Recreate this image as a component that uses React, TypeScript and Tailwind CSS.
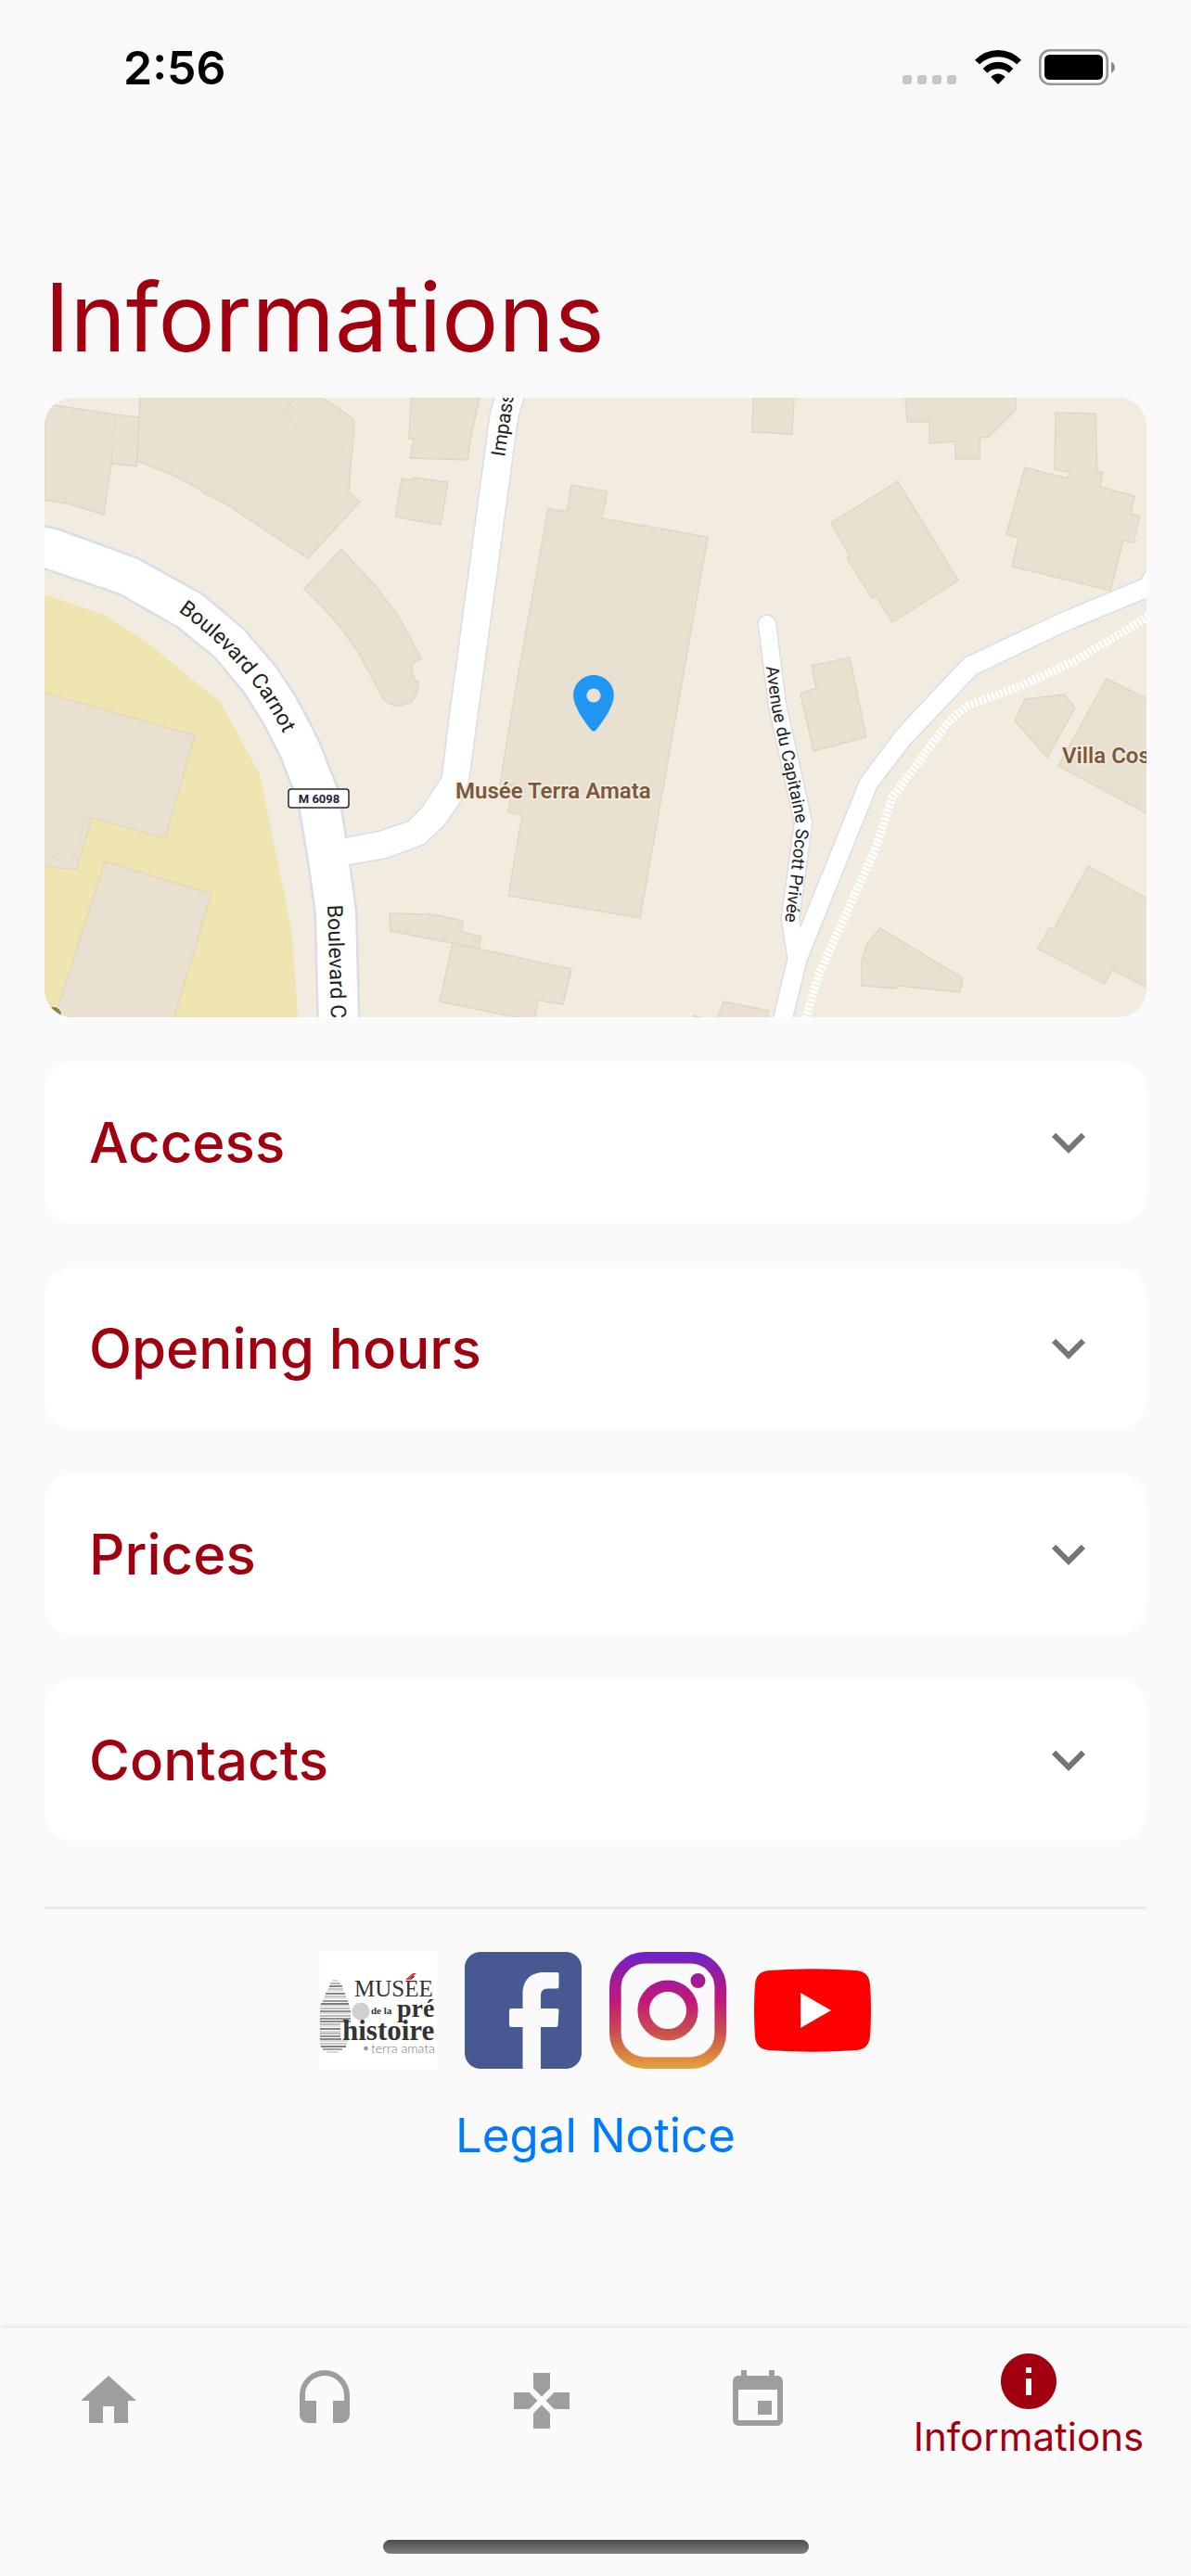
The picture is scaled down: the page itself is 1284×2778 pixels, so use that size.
import { useState } from 'react';
import { MdEvent, MdExpandMore, MdGames, MdHeadset, MdHome, MdInfo } from 'react-icons/md';

const sections = [
  { title: 'Access' },
  { title: 'Opening hours' },
  { title: 'Prices' },
  { title: 'Contacts' },
];

const tabs = [
  { name: 'Home', Icon: MdHome },
  { name: 'Audio guide', Icon: MdHeadset },
  { name: 'Games', Icon: MdGames },
  { name: 'Events', Icon: MdEvent },
  { name: 'Informations', Icon: MdInfo },
];

const buildings = [
  '0,6 11,8 76,18 103,21 99,74 72,71 64,126 25,114 0,110',
  '103,0 102,21 100,69 103,69 142,85 168,99 172,103 185,109 192,113 195,114 284,173 340,112 328,101 331,63 333,44 334,24 317,11 298,0',
  '320,163 355,201 378,231 389,249 406,281 395,288 399,305 403,306 403,313 400,322 395,329 382,332 371,330 365,324 338,274 319,247 302,228 280,206',
  '395,0 393,44 398,44 394,65 456,67 460,41 469,0',
  '385,87 397,89 398,86 435,91 427,137 392,131 378,128',
  '568,94 607,101 601,130 715,150 642,561 500,537 515,450 500,447 504,418 491,417 505,331 543,119 563,123',
  '764,0 763,37 806,39 808,0',
  '928,0 930,26 954,26 954,49 982,47 982,66 1008,66 1008,43 1018,42 1047,13 1047,0',
  '1090,16 1133,17 1135,79 1141,81 1138,96 1175,106 1171,125 1181,128 1174,156 1163,154 1149,208 1043,182 1050,151 1037,147 1057,75 1103,87 1105,80 1089,77',
  '920,90 985,197 914,242 896,213 892,216 865,173 868,170 848,135',
  '868,280 886,366 829,381 815,319 832,313 827,289',
  '1057,325 1099,320 1111,334 1081,388 1046,348',
  '1145,303 1192,326 1192,450 1093,397',
  '1125,505 1192,542 1192,638 1151,617 1143,632 1071,594 1083,572 1088,573',
  '901,572 990,626 987,641 919,634 918,637 881,634 881,608 886,590',
  '372,556 414,557 414,556 451,564 450,576 471,581 468,594 439,588 373,575',
  '440,588 568,616 559,654 532,650 528,670 508,668 426,651',
  '732,651 781,661 779,672 724,672',
  '-4,317 162,364 130,475 51,453 34,509 -4,505',
  '65,500 180,535 139,670 14,670 14,659',
];

const boulevard =
  'M-6 138 15 143 100 174 170 213 214 250 249 291 270 323 285 351 295 371 314 419 319 444 324 475 328 503 335 554 338 675 296 675 293 556 285 498 276 444 268 419 255 386 237 351 216 317 184 279 145 247 82 211 -6 181Z';
const impasse =
  'M488 -6 486 0 481 16 436 351 429 409 409 440 393 457 361 468 324 475 306 478 309 506 328 503 368 496 409 481 432 459 448 435 457 412 468 331 510 21 518 -6Z';
const avenue = 'M779 244 790 331 818 458 804 561 811 607';
const coastRoad =
  'M1194 176 1183 196 1094 233 992 281 926 351 916 363 880 411 815 572 801 607 785 674 805 674 821 608 897 420 932 374 954 351 1004 298 1102 251 1194 213Z';

function MuseumMap() {
  return (
    <svg
      viewBox="0 0 1188 668"
      className="block h-auto w-full rounded-[30px]"
      fontFamily="Roboto, sans-serif"
      role="img"
      aria-label="Map around Musée Terra Amata"
    >
      <rect width="1188" height="668" fill="#f2ebdf" />
      <path d="M0 212 64 234 111 264 189 328 191 331 232 406 267 578 273 668H0Z" fill="#eee5b1" />

      {/* BUILDINGS */}
      <g fill="#e8e1d2" stroke="#e0d7bd" strokeWidth="1.4">
        {buildings.map((points) => (
          <polygon key={points} points={points} />
        ))}
        <path d="M700 668v-2l9 3" />
        <path d="M77 18 72 71M269 0 257 21 331 63M0 494 30 503 45 451 51 453" fill="none" strokeWidth="0.7" />
      </g>
      <circle cx="9" cy="666" r="10" fill="#938541" stroke="#fff" strokeWidth="1" />

      {/* ROADS */}
      <g stroke="#d9dde8" fill="none">
        <path d={boulevard} strokeWidth="5" />
        <path d={impasse} strokeWidth="3" />
        <path d={avenue} strokeWidth="21" strokeLinecap="round" />
        <path d={coastRoad} strokeWidth="3" />
      </g>
      <g fill="#fff">
        <path d={boulevard} />
        <path d={impasse} />
        <path d={coastRoad} />
        <path d={avenue} fill="none" stroke="#fff" strokeWidth="18" strokeLinecap="round" />
      </g>
      <path
        d="M1190 236 1112 283 1052 311 995 332 975 349 914 431 895 488 835 621 820 672"
        fill="none"
        stroke="#fff"
        strokeWidth="9"
        strokeDasharray="3 1.8"
      />

      {/* STREET NAMES */}
      <path id="carnot" d="M144 230Q221 285 260 367L270 400" fill="none" />
      <path id="carnot-south" d="M305 547 309 668 312 760" fill="none" />
      <path id="impasse" d="M496 64 507 -10 512 -60" fill="none" />
      <path id="avenue" d="M778 290 784 335 809 452Q811 460 810 470L797 575" fill="none" />
      <g fill="#222">
        <text fontSize="23">
          <textPath href="#carnot">Boulevard Carnot</textPath>
        </text>
        <text fontSize="23">
          <textPath href="#carnot-south">Boulevard C</textPath>
        </text>
        <text fontSize="21">
          <textPath href="#impasse">Impass</textPath>
        </text>
        <text fontSize="19">
          <textPath href="#avenue">Avenue du Capitaine Scott Privée</textPath>
        </text>
      </g>
      <rect x="263" y="422" width="65" height="20" rx="3" fill="#fff" stroke="#24243a" strokeWidth="1.5" />
      <text x="296" y="437" fontSize="13" fontWeight="700" textAnchor="middle" fill="#24243a">
        M 6098
      </text>

      {/* PLACES */}
      <g fontSize="24" fontWeight="600" fill="#7d583c" stroke="#f4eee2" strokeWidth="3" paintOrder="stroke">
        <text x="443" y="432">
          Musée Terra Amata
        </text>
        <text x="1097" y="394">
          Villa Cos
        </text>
      </g>
      <path
        transform="translate(554.5 292.7) scale(3.12)"
        d="M12 2C8.13 2 5 5.13 5 9c0 4.17 4.42 9.92 6.24 12.11.4.48 1.13.48 1.53 0C14.58 18.92 19 13.17 19 9c0-3.87-3.13-7-7-7z"
        fill="#2196f3"
      />
      <circle cx="592" cy="321" r="7.6" fill="#e8e1d2" />
    </svg>
  );
}

// [y, left, right, colour] for each line of the biface drawing
const stripes: [number, number, number, string][] = [
  [31, 13, 20, '#bbb'],
  [34, 11, 22, '#777'],
  [37, 10, 24, '#222'],
  [40, 9, 25, '#999'],
  [42, 7, 26, '#ccc'],
  [45, 6, 27, '#222'],
  [48, 5, 28, '#999'],
  [50, 4, 29, '#ccc'],
  [53, 3, 30, '#444'],
  [56, 1, 31, '#111'],
  [58, 0, 32, '#bbb'],
  [61, 0, 32, '#888'],
  [64, 0, 33, '#222'],
  [66, 0, 33, '#bbb'],
  [69, 0, 33, '#777'],
  [72, 0, 33, '#222'],
  [75, 0, 33, '#111'],
  [78, 0, 22, '#888'],
  [80, 0, 22, '#ccc'],
  [83, 0, 22, '#222'],
  [86, 0, 22, '#aaa'],
  [88, 0, 22, '#888'],
  [91, 0, 22, '#333'],
  [94, 0, 23, '#222'],
  [96, 0, 30, '#bbb'],
  [99, 0, 29, '#999'],
  [102, 1, 28, '#111'],
  [105, 3, 24, '#555'],
  [108, 7, 20, '#bbb'],
];

function MuseumLogo() {
  return (
    <svg viewBox="0 0 126 126" className="size-[126px]" fill="#333" fontFamily="'Liberation Serif', serif">
      <rect width="126" height="126" fill="#fff" />
      {stripes.map(([y, x1, x2, color]) => (
        <path key={y} d={`M${x1} ${y}H${x2}`} stroke={color} strokeWidth="1.1" />
      ))}
      <circle cx="44" cy="64" r="9.5" fill="#d0d0d2" />
      <text x="37" y="48" fontSize="25">
        MUSÉE
      </text>
      <path d="m92 30 8-7h4l-8 7z" fill="#ed2f3a" />
      <g fontWeight="700">
        <text x="55" y="67" fontSize="11">
          de la
        </text>
        <text x="83" y="70" fontSize="28">
          pré
        </text>
        <text x="24" y="95" fontSize="31">
          histoire
        </text>
      </g>
      <circle cx="49.5" cy="104" r="2.3" fill="#999" />
      <text x="55" y="109" fontSize="14" fontWeight="300" fontFamily="Lato, sans-serif" fill="#777">
        terra amata
      </text>
    </svg>
  );
}

function FacebookLogo() {
  return (
    <svg viewBox="0 0 126 126" className="size-[126px]">
      <rect width="126" height="126" rx="17" fill="#475993" />
      <path
        d="M62.5 126V81H50q-2 0-2-2V63q0-2 2-2h12.5V45C62.5 31 71 22 85 22h14.5q2 0 2 2v13.5q0 2-2 2H90c-6 0-8 3-8 8V61h17.5q2 0 2 2l-1 16q0 2-2 2H82v45z"
        fill="#fafafa"
      />
    </svg>
  );
}

function InstagramLogo() {
  return (
    <svg viewBox="0 0 126 126" className="size-[126px]">
      <defs>
        <linearGradient id="insta" x1="0" y1="0" x2="0" y2="126" gradientUnits="userSpaceOnUse">
          <stop offset="0" stopColor="#6b25ce" />
          <stop offset="0.2" stopColor="#981c9c" />
          <stop offset="0.42" stopColor="#c4177a" />
          <stop offset="0.68" stopColor="#c94d50" />
          <stop offset="0.85" stopColor="#d67c42" />
          <stop offset="1" stopColor="#e6a13b" />
        </linearGradient>
      </defs>
      <g fill="none" stroke="url(#insta)" strokeWidth="12.6">
        <rect x="6.3" y="6.3" width="113.4" height="113.4" rx="32" />
        <circle cx="63" cy="63" r="26.3" />
      </g>
      <circle cx="95.5" cy="31" r="8" fill="url(#insta)" />
    </svg>
  );
}

function YoutubeLogo() {
  return (
    <svg viewBox="0 0 126 126" className="size-[126px]">
      <path
        d="M16 20Q63 16.5 110 20C120 21 124 26 125 35Q127 63 125 91C124 100 120 105 110 106Q63 109.5 16 106C6 105 2 100 1 91Q-1 63 1 35C2 26 6 21 16 20Z"
        fill="#f00"
      />
      <path d="M50 44 83 63 50 82Z" fill="#fff" />
    </svg>
  );
}

function StatusBar() {
  return (
    <div className="flex items-start justify-between pt-[43px] pr-[81px] pl-[133px]">
      <span className="text-[50px] leading-[60px] font-semibold text-black">2:56</span>
      <div className="flex items-end pt-[10px]">
        <div className="mb-px flex gap-[6px]">
          <span className="size-[10px] rounded-[3px] bg-[#c7c7c7]" />
          <span className="size-[10px] rounded-[3px] bg-[#c7c7c7]" />
          <span className="size-[10px] rounded-[3px] bg-[#c7c7c7]" />
          <span className="size-[10px] rounded-[3px] bg-[#c7c7c7]" />
        </div>
        <svg viewBox="0 0 50 38" className="ml-5 h-[38px] w-[50px]">
          <path d="M0 10.7Q11 0 25 0T50 10.7L45.3 15.3Q36 7.3 25 7.3T5 15.3Z" />
          <path d="M8.7 20Q15.5 12.7 25 12.7T41.3 20L36.7 24.7Q32 20.3 25 20.3T13.3 24.7Z" />
          <path d="M17.3 29Q20.5 25.5 25 25.5T32.7 29L25 37Z" />
        </svg>
        <svg viewBox="0 0 83 39" className="ml-[19px] h-[39px] w-[83px]">
          <rect x="1.3" y="1.3" width="72.4" height="36.4" rx="10.5" fill="#fff" stroke="#979797" strokeWidth="2.6" />
          <rect x="6" y="6" width="63" height="27" rx="5.5" />
          <path d="M78 13.5q4 2 4 6t-4 6z" fill="#8a8a8a" />
        </svg>
      </div>
    </div>
  );
}

export default function App() {
  const [open, setOpen] = useState('');
  const [tab, setTab] = useState('Informations');

  return (
    <div className="flex min-h-screen flex-col bg-[#fafafa] font-['Inter','Noto_Sans',sans-serif]">
      <header className="bg-[#f9f9f9] pb-[27px]">
        <StatusBar />
        <h1 className="mt-[179px] px-12 text-[102px] leading-[120px] text-[#a00010]">Informations</h1>
      </header>

      <main className="flex-1 px-12">
        <MuseumMap />

        {/* SECTIONS */}
        <div className="mt-12 space-y-12">
          {sections.map(({ title }) => (
            <button
              key={title}
              type="button"
              aria-expanded={open === title}
              onClick={() => setOpen(open === title ? '' : title)}
              className="flex h-[174px] w-full items-center justify-between rounded-[30px] bg-white px-12"
            >
              <span className="text-[60px] leading-[72px] font-medium text-[#a00010]">{title}</span>
              <MdExpandMore className="size-[72px] text-[#757575]" />
            </button>
          ))}
        </div>

        {/* LINKS */}
        <div className="mt-[71px] border-t-[3px] border-[#ebebeb] pt-[46px] text-center">
          <div className="flex justify-center gap-[30px]">
            <a href="#museum" aria-label="Musée de la préhistoire Terra Amata">
              <MuseumLogo />
            </a>
            <a href="#facebook" aria-label="Facebook">
              <FacebookLogo />
            </a>
            <a href="#instagram" aria-label="Instagram">
              <InstagramLogo />
            </a>
            <a href="#youtube" aria-label="YouTube">
              <YoutubeLogo />
            </a>
          </div>
          <a href="#legal" className="mt-[42px] inline-block text-[51px] leading-[60px] text-[#007aff]">
            Legal Notice
          </a>
        </div>
      </main>

      {/* BOTTOM NAV */}
      <footer className="shadow-[0_-1px_8px_rgba(0,0,0,0.1)]">
        <nav className="flex h-[228px]">
          {tabs.map(({ name, Icon }) => (
            <button
              key={name}
              type="button"
              aria-label={name}
              onClick={() => setTab(name)}
              className={
                name === tab
                  ? 'flex flex-3 flex-col items-center pt-[21px] text-[#a00010]'
                  : 'flex flex-2 flex-col items-center pt-[42px] text-[#9e9e9e]'
              }
            >
              <Icon className="size-[72px]" />
              {name === tab && <span className="text-[42px] leading-[48px]">{name}</span>}
            </button>
          ))}
        </nav>
        <div className="mx-auto mb-6 h-[15px] w-[459px] rounded-full bg-linear-to-b from-[#4d4d4d] to-[#808080]" />
      </footer>
    </div>
  );
}
